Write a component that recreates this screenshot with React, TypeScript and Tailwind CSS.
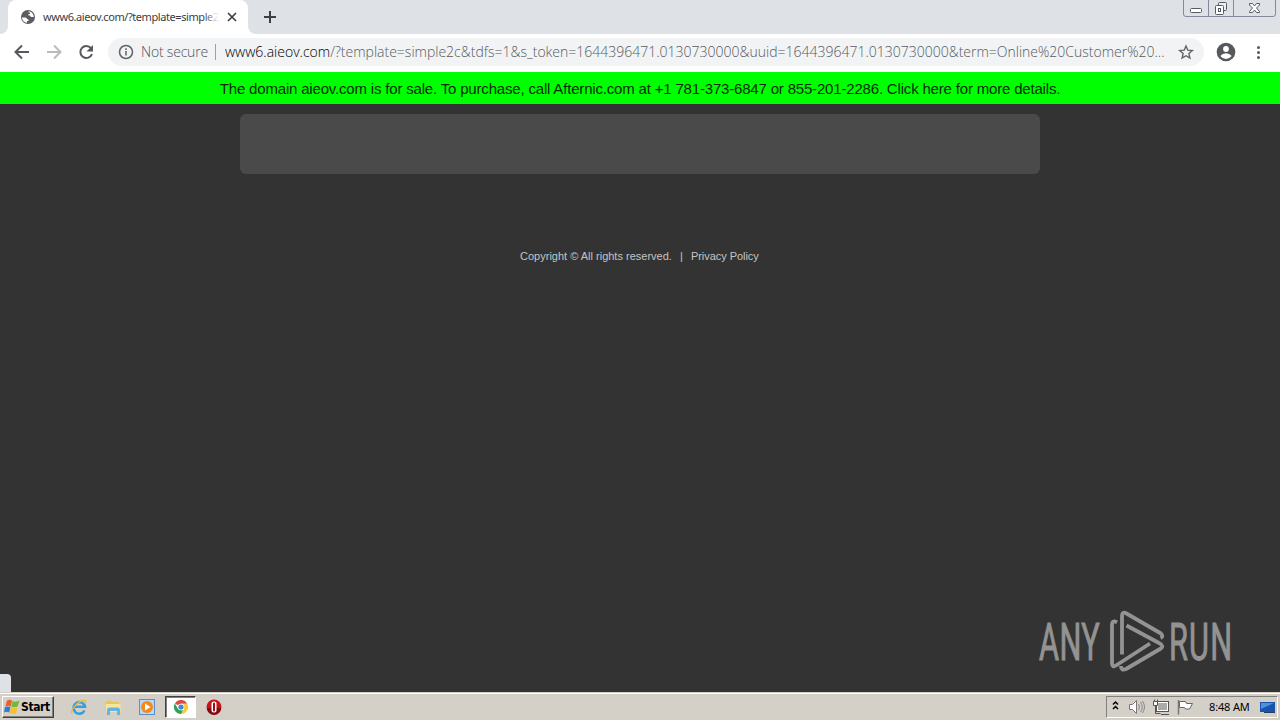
import React from 'react';

const Tab = () => (
  <div className="flex h-[34px] justify-between bg-[#dee1e6]">
    <div className="flex">
      <div className="w-2 bg-white">
        <div className="h-full rounded-br-lg bg-[#dee1e6]" />
      </div>
      <div className="flex w-[240px] items-center rounded-t-lg bg-white pl-3">
        <svg className="h-4 w-4 shrink-0" viewBox="0 0 16 16">
          <circle cx="8" cy="8" r="7" fill="#5a5d61" />
          <path d="M2 8.500h3.500q1.500 0 1.500 1.500l1.500.5v1.500h-1.500v1.800C4.500 13.500 2 11.500 2 8.500zM8.500 2.200c3 .3 5.300 2.600 5.300 5.800H11l-1-1.500H8.500V5H10V3.500H8.500z" fill="#fff" />
        </svg>
        <div className="relative ml-[7px] w-[176px] shrink-0 whitespace-nowrap font-['Noto_Sans',sans-serif] text-[11px] leading-4 tracking-[-0.42px] text-[#3c4043]">
          www6.aieov.com/?template=simple2
          <div className="absolute inset-y-0 right-0 w-4 bg-gradient-to-r from-transparent to-white" />
        </div>
        <svg className="ml-[7px] h-3 w-3 shrink-0" viewBox="0 0 12 12" stroke="#3c4043" strokeWidth="1.700">
          <path d="M2 2l8 8M10 2l-8 8" />
        </svg>
      </div>
      <div className="w-2 bg-white">
        <div className="h-full rounded-bl-lg bg-[#dee1e6]" />
      </div>
      <svg className="mt-[10px] ml-[7px] h-[14px] w-[14px]" viewBox="0 0 14 14" stroke="#3c4043" strokeWidth="2">
        <path d="M7 1v12M1 7h12" />
      </svg>
    </div>
    <svg className="mr-1 h-[18px] w-[94px]" viewBox="0 0 94 18" fill="none" stroke="#858a98">
      <path d="M1.500 0v14q0 2.500 2.500 2.500h87q2.500 0 2.500-2.500V0M26.500 0v16M51.500 0v16" />
      <g stroke="#555a66">
        <rect x="8.500" y="8.500" width="11" height="4" rx="1" fill="#fff" />
        <rect x="36.500" y="2.500" width="8" height="8" rx="1" fill="#eee" />
        <rect x="33.500" y="5.500" width="8" height="9" rx="1" fill="#fff" />
        <rect x="36.500" y="8.500" width="2" height="3" />
        <path d="M67.500 3.500h3l2 2.500 2-2.500h3v1.500L74.500 8l3 3.500v1h-3l-2-2.500-2 2.500h-3v-1l3-3.500-3-3z" fill="#fff" />
      </g>
    </svg>
  </div>
);

const Toolbar = () => (
  <div className="flex h-[38px] items-center bg-white">
    <svg className="mb-[2px] h-9 w-[108px] shrink-0" viewBox="0 0 108 36" fill="none" strokeWidth="2">
      <path d="M29 18H16M22 11.500L15.500 18l6.500 6.500" stroke="#55585c" />
      <path d="M47 18h13M54 11.500l6.500 6.500-6.500 6.500" stroke="#b9bbbe" />
      <path d="M91 14.200A6 6 0 1 0 92 20" stroke="#55585c" />
      <path d="M93 11v6.500h-6.500z" fill="#55585c" />
    </svg>
    <div className="mb-[2px] flex h-7 w-[1096px] shrink-0 items-center rounded-full bg-[#f1f3f4] pl-[10px] font-['Open_Sans','Noto_Sans',sans-serif] text-[14px] leading-5 font-light whitespace-nowrap">
      <svg className="h-4 w-4 shrink-0" viewBox="0 0 16 16" fill="none" stroke="#5f6368" strokeWidth="1.500">
        <circle cx="8" cy="8" r="6.500" />
        <path d="M8 7v4.500M8 4.300v1.600" />
      </svg>
      <span className="ml-[7px] w-[67px] shrink-0 tracking-[-0.2px] text-[#50545a]">Not secure</span>
      <span className="ml-[7px] h-4 w-px shrink-0 bg-[#9aa0a6]" />
      <span className="ml-[9px] w-[942px] shrink-0 text-[#565b61]">
        <span className="text-black">www6.aieov.com</span>
        /?template=simple2c&amp;tdfs=1&amp;s_token=1644396471.0130730000&amp;uuid=1644396471.0130730000&amp;term=Online%20Customer%20...
      </span>
      <svg className="ml-[11px] h-4 w-4 shrink-0" viewBox="0 0 16 16" fill="none" stroke="#5f6368" strokeWidth="1.400">
        <path d="M8 2l1.800 4.200 4.500.4-3.400 3 1 4.400L8 11.700 4.100 14l1-4.400-3.400-3 4.500-.4z" />
      </svg>
    </div>
    <svg className="mb-[2px] ml-[12px] h-5 w-5 shrink-0" viewBox="0 0 20 20">
      <circle cx="10" cy="10" r="9.300" fill="#55585c" />
      <circle cx="10" cy="7" r="2.900" fill="#fff" />
      <path d="M4.300 14q2-2.800 5.700-2.800t5.700 2.800Q13.500 17 10 17t-5.700-3z" fill="#fff" />
    </svg>
    <svg className="mb-[2px] ml-[16px] h-4 w-4" viewBox="0 0 16 16" fill="#55585c">
      <circle cx="6.500" cy="3.500" r="1.500" />
      <circle cx="6.500" cy="8.500" r="1.500" />
      <circle cx="6.500" cy="13.500" r="1.500" />
    </svg>
  </div>
);

const Watermark = () => (
  <svg className="absolute right-[40px] bottom-[17px] h-[70px] w-[210px]" viewBox="0 0 210 70" fill="#939393">
    <g fontFamily="'Roboto','Liberation Sans',sans-serif" fontSize="52" stroke="#939393" strokeWidth="1">
      <text transform="translate(9 54.500) scale(.59 1)" textLength="103" lengthAdjust="spacing">ANY</text>
      <text transform="translate(139 54.500) scale(.59 1)" textLength="107" lengthAdjust="spacing">RUN</text>
    </g>
    <g fill="none" stroke="#939393" strokeWidth="3.800" strokeLinejoin="round">
      <path d="M87 17.500q-5-3-5 3V58q0 5 4 2.500L120 38.500" />
      <path d="M92 49.500V11q0-5 4.500-2.500L131 28.500q3 3-.5 4.500" />
      <path d="M96.500 20.500L129 38q6 3 1 6L96 64q-5 2-5-3" />
    </g>
  </svg>
);

const Taskbar = () => (
  <div className="flex h-7 items-center justify-between border-t border-[#d4d0c8] bg-[#d4d0c8] shadow-[inset_0_1px_0_#fff]">
    <div className="flex items-center">
      <div className="ml-[2px] flex h-[22px] w-[52px] items-center border border-t-white border-r-[#404040] border-b-[#404040] border-l-white pl-px shadow-[inset_-1px_-1px_0_#808080]">
        <svg className="h-4 w-4 shrink-0" viewBox="0 0 16 16">
          <path d="M3 1.500q2.500-1.500 5 0L6.800 7.500q-2.800-1.400-5.500 0z" fill="#e8632a" />
          <path d="M8.500 2.100q3 1.500 7-.5l-1.800 6q-3 1.600-6.400-.2z" fill="#72b840" />
          <path d="M1 8.100q2.700-1.400 5.500 0L5.200 13.500q-2.700-1.500-5.200 0z" fill="#3779cc" />
          <path d="M7.200 8.200q3 1.700 6.300.2L12 14.500q-3.300 1.300-6.300-.5z" fill="#f5c12e" />
        </svg>
        <span className="ml-px font-['DejaVu_Sans_Condensed','DejaVu_Sans',sans-serif] text-[12px] leading-4 font-bold tracking-[-0.4px] text-black">Start</span>
      </div>
      <svg className="ml-[16px] h-[18px] w-[18px]" viewBox="0 0 18 18" fill="none">
        <path d="M14.500 12.500a5.800 5.800 0 1 1 .5-3.700H5" stroke="#379fdc" strokeWidth="2.600" />
        <path d="M2 15.500C0 12 8 3.500 13 2.500c3-.6 3 1.500 2 3.500" stroke="#e9b93c" strokeWidth="1.300" />
      </svg>
      <svg className="ml-4 h-[18px] w-[18px]" viewBox="0 0 18 18">
        <path d="M1.500 3.500l5-1 1.500 1.500h7v10h-13.500z" fill="#e8c65b" />
        <path d="M2 6h14.500v8H2z" fill="#f8e49a" />
        <path d="M3 17v-5q0-2.500 2.500-2.500h8q2.500 0 2.500 2.500v5h-3v-4H6v4z" fill="#65b5dd" />
      </svg>
      <svg className="ml-4 h-[18px] w-[18px]" viewBox="0 0 18 18">
        <rect x="1.500" y="1.500" width="15" height="15" fill="#b9d8f2" stroke="#5b8fc7" />
        <circle cx="9" cy="9" r="6" fill="#f28b1d" />
        <path d="M7 5.500l5.500 3.500L7 12.500z" fill="#fff" />
      </svg>
      <div className="ml-[9px] flex h-[22px] w-[31px] items-center justify-center border border-t-[#404040] border-r-white border-b-white border-l-[#404040] bg-white shadow-[inset_1px_1px_0_#808080]">
        <svg className="h-[14px] w-[14px]" viewBox="0 0 14 14">
          <path d="M7 7L.9 3.500a7 7 0 0 1 12.200 0z" fill="#dd4b3e" />
          <path d="M7 7V3.500h6.100A7 7 0 0 1 7 14l3-5.300z" fill="#f7cb3d" />
          <path d="M7 14A7 7 0 0 1 .9 3.500L4 8.700l3 1.500 2 0z" fill="#2fa255" />
          <circle cx="7" cy="7" r="3.300" fill="#fff" />
          <circle cx="7" cy="7" r="2.600" fill="#4285d8" />
        </svg>
      </div>
      <svg className="ml-[10px] h-4 w-4" viewBox="0 0 16 16">
        <circle cx="8" cy="8" r="7.500" fill="#c2161d" />
        <path d="M1 9a7 7 0 0 0 14 0z" fill="#86090e" />
        <rect x="5.500" y="2.500" width="5" height="11" rx="2" fill="#fff" />
        <rect x="7" y="3.500" width="2" height="9" rx="1" fill="#a10d14" />
      </svg>
    </div>
    <div className="mr-[2px] flex h-[22px] w-[172px] items-center border border-t-[#808080] border-r-white border-b-white border-l-[#808080]">
      <svg className="h-5 w-[92px] shrink-0" viewBox="0 0 92 20" fill="none">
        <path d="M6 7.500l2.500-2.500L11 7.500M6 12l2.500-2.500L11 12" stroke="#000" strokeWidth="1.500" />
        <path d="M22.500 7.500h3l4-4v13l-4-4h-3z" fill="#fff" stroke="#777" />
        <path d="M31.500 7q2 3 0 6M33.500 5q3.500 5 0 10M35.500 4q4 6 0 12" stroke="#888" />
        <rect x="50.500" y="5.500" width="10" height="8" fill="#aaa" stroke="#fff" />
        <rect x="49.500" y="4.500" width="12" height="10" stroke="#555" />
        <path d="M54 17.500h8M48.500 9v7.500h5" stroke="#555" />
        <path d="M46.500 4.500h4v4h-4z" fill="#fff" stroke="#555" />
        <path d="M47.500 2.500v2M50.500 2.500v2" stroke="#555" />
        <path d="M71.500 3v14.500" stroke="#777" strokeWidth="1.500" />
        <path d="M72.500 4.500h6l1 2h6l-3 5.500h-4l-1-1.500h-5z" fill="#fff" stroke="#666" />
      </svg>
      <span className="ml-[10px] w-[42px] shrink-0 font-['Noto_Sans',sans-serif] text-[11px] leading-4 tracking-[-0.15px] whitespace-nowrap text-black">8:48 AM</span>
      <svg className="ml-[8px] h-4 w-4 shrink-0" viewBox="0 0 16 16">
        <path d="M1 3h15v10H1z" fill="#1754ad" />
        <path d="M2 4h13L2 10z" fill="#4e91da" />
        <path d="M5 13h11v1H5z" fill="#263e60" />
      </svg>
    </div>
  </div>
);

const App = () => {
  return (
    <div className="flex h-[720px] w-[1280px] flex-col overflow-hidden bg-[#333]">
      <Tab />
      <Toolbar />
      <div className="h-8 bg-[#00ff00] pt-[5px] text-center font-['Liberation_Sans',sans-serif] text-[15px] leading-6 tracking-[-0.18px] text-[#042b04]">
        The domain aieov.com is for sale. To purchase, call Afternic.com at +1 781-373-6847 or 855-201-2286. Click here for more details.
      </div>
      <main className="relative flex-1">
        <div className="mx-auto mt-[10px] h-[60px] w-[800px] rounded-md bg-[#4a4a4a]" />
        <div className="mt-[74px] flex justify-center font-['Liberation_Sans',sans-serif] text-[11px] leading-4 text-[#c4c4c4]">
          <span className="w-[152px] whitespace-nowrap">Copyright © All rights reserved.</span>
          <span className="mx-2">|</span>
          <span className="w-[69px] tracking-[-0.05px] whitespace-nowrap">Privacy Policy</span>
        </div>
        <Watermark />
        <div className="absolute bottom-0 left-0 h-[18px] w-[11px] rounded-tr bg-[#dee1e6]" />
      </main>
      <Taskbar />
    </div>
  );
};

export default App;
